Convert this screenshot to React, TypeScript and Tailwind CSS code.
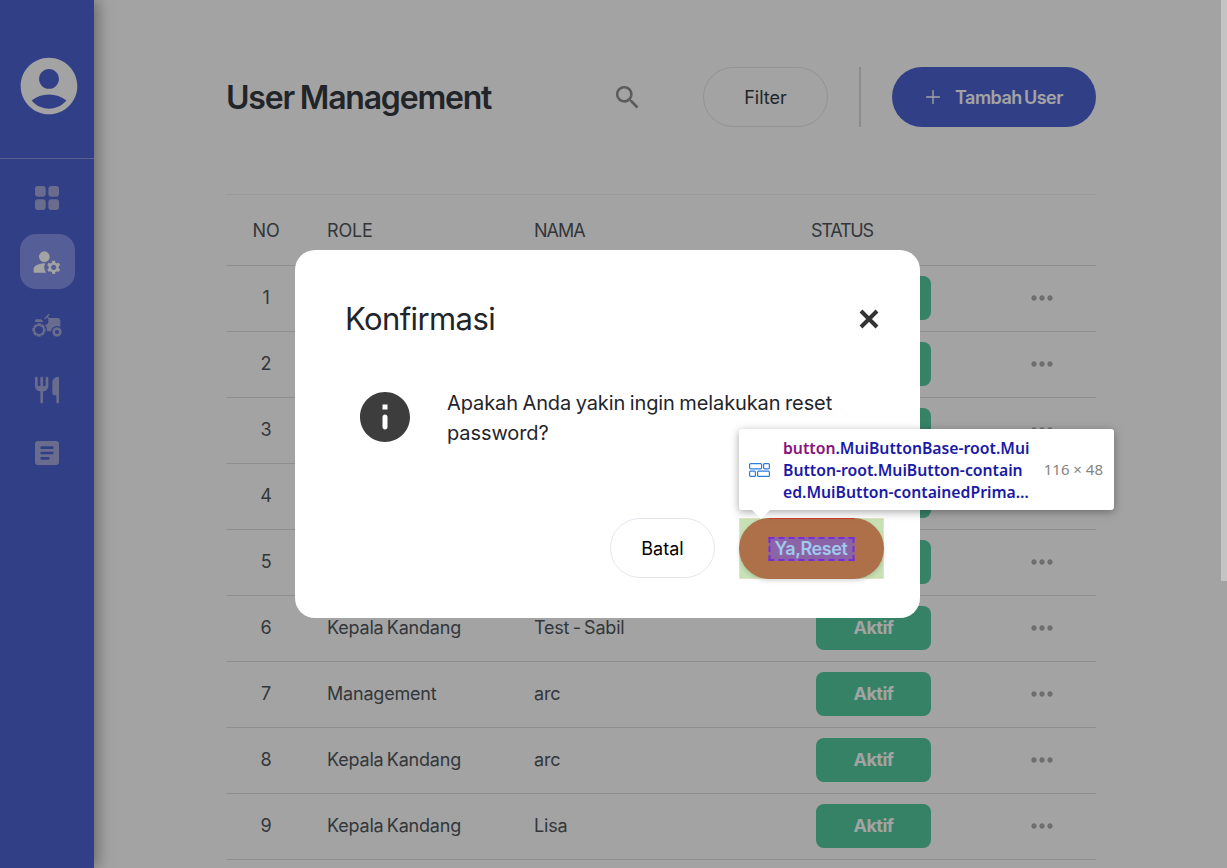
import { MdAgriculture, MdManageAccounts, MdMoreHoriz, MdSearch } from "react-icons/md";
import { Plus } from "lucide-react";

const rows = [
  { no: 1, role: "Management", name: "Admin" },
  { no: 2, role: "Kepala Kandang", name: "Budi" },
  { no: 3, role: "Kepala Kandang", name: "Sari" },
  { no: 4, role: "Management", name: "Andi" },
  { no: 5, role: "Kepala Kandang", name: "Rudi" },
  { no: 6, role: "Kepala Kandang", name: "Test - Sabil" },
  { no: 7, role: "Management", name: "arc" },
  { no: 8, role: "Kepala Kandang", name: "arc" },
  { no: 9, role: "Kepala Kandang", name: "Lisa" },
];

function AvatarIcon() {
  return (
    <svg viewBox="0 0 24 24" className="w-[68px] h-[68px] text-white" fill="currentColor">
      <path d="M12 2C6.48 2 2 6.48 2 12s4.48 10 10 10 10-4.48 10-10S17.52 2 12 2zm0 4c1.93 0 3.5 1.57 3.5 3.5S13.93 13 12 13s-3.5-1.57-3.5-3.5S10.07 6 12 6zm0 14c-2.03 0-4.43-.82-6.14-2.88C7.55 15.8 9.68 15 12 15s4.45.8 6.14 2.12C16.43 19.18 14.03 20 12 20z" />
    </svg>
  );
}

function GridIcon() {
  return (
    <svg viewBox="0 0 24 24" className="w-8 h-8" fill="currentColor">
      <path d="M5 11h4c1.1 0 2-.9 2-2V5c0-1.1-.9-2-2-2H5c-1.1 0-2 .9-2 2v4c0 1.1.9 2 2 2zm0 10h4c1.1 0 2-.9 2-2v-4c0-1.1-.9-2-2-2H5c-1.1 0-2 .9-2 2v4c0 1.1.9 2 2 2zm8-16v4c0 1.1.9 2 2 2h4c1.1 0 2-.9 2-2V5c0-1.1-.9-2-2-2h-4c-1.1 0-2 .9-2 2zm2 16h4c1.1 0 2-.9 2-2v-4c0-1.1-.9-2-2-2h-4c-1.1 0-2 .9-2 2v4c0 1.1.9 2 2 2z" />
    </svg>
  );
}

function RestaurantIcon() {
  return (
    <svg viewBox="0 0 24 24" className="w-8 h-8" fill="currentColor">
      <path d="M16 6v8c0 1.1.9 2 2 2h1v5c0 .55.45 1 1 1s1-.45 1-1V3.13c0-.65-.61-1.13-1.24-.98C17.6 2.68 16 4.51 16 6zM11 9H9V3c0-.55-.45-1-1-1S7 2.45 7 3v6H5V3c0-.55-.45-1-1-1S3 2.45 3 3v6c0 2.21 1.79 4 4 4v8c0 .55.45 1 1 1s1-.45 1-1v-8c2.21 0 4-1.79 4-4V3c0-.55-.45-1-1-1s-1 .45-1 1v6z" />
    </svg>
  );
}

function ArticleIcon() {
  return (
    <svg viewBox="0 0 24 24" className="w-8 h-8" fill="currentColor">
      <path d="M19 3H5c-1.1 0-2 .9-2 2v14c0 1.1.9 2 2 2h14c1.1 0 2-.9 2-2V5c0-1.1-.9-2-2-2zm-6 14H8c-.55 0-1-.45-1-1s.45-1 1-1h5c.55 0 1 .45 1 1s-.45 1-1 1zm3-4H8c-.55 0-1-.45-1-1s.45-1 1-1h8c.55 0 1 .45 1 1s-.45 1-1 1zm0-4H8c-.55 0-1-.45-1-1s.45-1 1-1h8c.55 0 1 .45 1 1s-.45 1-1 1z" />
    </svg>
  );
}

function InfoIcon() {
  return (
    <svg viewBox="0 0 24 24" className="w-[60px] h-[60px] text-[#3d3d3d]" fill="currentColor">
      <path d="M12 2C6.48 2 2 6.48 2 12s4.48 10 10 10 10-4.48 10-10S17.52 2 12 2zm0 15c-.55 0-1-.45-1-1v-4c0-.55.45-1 1-1s1 .45 1 1v4c0 .55-.45 1-1 1zm1-8h-2V7h2v2z" />
    </svg>
  );
}

function Sidebar() {
  return (
    <aside className="w-[94px] shrink-0 h-full bg-[#4e63d2] shadow-[4px_0_14px_rgba(0,0,0,0.35)] z-10">
      <div className="h-[159px] border-b border-[#8c97e0] flex items-start justify-center pt-[52px] pl-[3px]">
        <AvatarIcon />
      </div>
      <nav className="flex flex-col items-center gap-[9px] pt-[11px] text-[#a5a9dc]">
        <div className="w-[55px] h-[55px] flex items-center justify-center rounded-2xl">
          <GridIcon />
        </div>
        <div className="w-[55px] h-[55px] flex items-center justify-center rounded-2xl bg-[#8594ed] text-white">
          <MdManageAccounts size={32} />
        </div>
        <div className="w-[55px] h-[55px] flex items-center justify-center rounded-2xl">
          <MdAgriculture size={32} />
        </div>
        <div className="w-[55px] h-[55px] flex items-center justify-center rounded-2xl">
          <RestaurantIcon />
        </div>
        <div className="w-[55px] h-[55px] -mt-[1px] flex items-center justify-center rounded-2xl">
          <ArticleIcon />
        </div>
      </nav>
    </aside>
  );
}

function UserTable() {
  return (
    <div className="mt-[67px] border-t border-[#f0f0f0] text-[18px] text-[#50565d] tracking-[-0.2px] [word-spacing:-1.5px]">
      <div className="h-[71px] grid grid-cols-[101px_207px_282px_115px_1fr] items-center border-b border-[#dfdfdf]">
        <div className="w-[80px] text-center">NO</div>
        <div>ROLE</div>
        <div className="tracking-[-1px]">NAMA</div>
        <div className="-ml-[5px] tracking-[-1.2px]">STATUS</div>
        <div />
      </div>
      {rows.map((r) => (
        <div key={r.no} className="h-[66px] pb-[1px] grid grid-cols-[101px_207px_282px_115px_1fr] items-center border-b border-[#dfdfdf]">
          <div className="w-[80px] text-center pb-[2px]">{r.no}</div>
          <div className="pb-[2px]">{r.role}</div>
          <div className="pb-[2px]">{r.name}</div>
          <div className="h-[44px] pb-[2px] rounded-lg bg-[#53cba1] text-white font-bold tracking-[-0.5px] flex items-center justify-center">
            Aktif
          </div>
          <div className="pl-[95px] text-[#adadad]">
            <MdMoreHoriz size={32} />
          </div>
        </div>
      ))}
    </div>
  );
}

function Highlight() {
  return (
    <div className="relative w-[145px] h-[61px] bg-[#c7e0b5] border border-[#e5e3c0]">
      <div className="absolute -inset-[1px] rounded-full bg-[#ad7049] shadow-[0_2px_4px_rgba(0,0,0,0.15)] flex items-center justify-center">
        <div className="absolute top-0 left-[30px] right-[30px] h-[1px] bg-[#c8402a]" />
        <div className="w-[86px] h-[24px] bg-[#8b64a8] border-2 border-dashed border-[#7b2fd0] flex items-center justify-center text-[#a0c9ec] text-[18px] font-semibold tracking-[-0.4px] -translate-x-[0.5px]">
          Ya,Reset
        </div>
      </div>
    </div>
  );
}

function Inspector() {
  return (
    <div className="absolute z-40 left-[739px] top-[429px] w-[375px] h-[81px] bg-white rounded-[3px] shadow-[0_2px_8px_rgba(0,0,0,0.35)] flex items-center pl-[10px] pr-[11px] font-['Noto_Sans',sans-serif]">
      <svg viewBox="0 0 21 14" className="w-[21px] h-[14px] shrink-0" fill="none" stroke="#2a7de1" strokeWidth="1.2">
        <rect x="0.6" y="0.6" width="12" height="5.2" rx="1" />
        <rect x="14.6" y="0.6" width="5.8" height="5.2" rx="1" />
        <rect x="0.6" y="8.2" width="5.8" height="5.2" rx="1" />
        <rect x="8.6" y="8.2" width="11.8" height="5.2" rx="1" />
      </svg>
      <div className="ml-[13px] w-[250px] shrink-0 text-[15.75px] leading-[22px] font-semibold text-[#1a1aa6] whitespace-nowrap">
        <div>
          <span className="text-[#881280]">button</span>.MuiButtonBase-root.Mui
        </div>
        <div>Button-root.MuiButton-contain</div>
        <div>ed.MuiButton-containedPrima…</div>
      </div>
      <div className="ml-auto whitespace-nowrap text-[15px] text-[#858585]">116 × 48</div>
      <div className="absolute left-[13px] -bottom-[9px] w-0 h-0 border-l-[9px] border-r-[9px] border-t-[9px] border-l-transparent border-r-transparent border-t-white" />
    </div>
  );
}

function ConfirmDialog() {
  return (
    <div className="w-[625px] h-[368px] bg-white rounded-[20px] pl-[50px] pr-[36px] pt-[46px] flex flex-col text-[#1f252b]">
      <div className="h-[46px] flex items-center justify-between">
        <h2 className="text-[31px] tracking-[-0.6px] font-normal">Konfirmasi</h2>
        <svg viewBox="0 0 20 20" className="w-5 h-5 text-[#333] mr-[5px]" fill="none" stroke="currentColor" strokeWidth="4">
          <path d="M2 2 18 18M18 2 2 18" />
        </svg>
      </div>
      <div className="flex mt-[48px] pl-[10px] items-start">
        <div className="w-[60px] shrink-0 -mt-[3px]">
          <InfoIcon />
        </div>
        <p className="ml-[32px] w-[400px] text-[20px] leading-[30px] tracking-[-0.1px] [word-spacing:-1px] -mt-[2px]">
          Apakah Anda yakin ingin melakukan reset password?
        </p>
      </div>
      <div className="mt-auto mb-[39px] flex justify-end items-start gap-[24px]">
        <button className="w-[105px] h-[60px] rounded-full border border-[#e6e6f0] text-black text-[18px]">Batal</button>
        <Highlight />
      </div>
    </div>
  );
}

export default function App() {
  return (
    <div className="relative w-[1227px] h-[868px] overflow-hidden bg-white flex font-['Inter',sans-serif]">
      <Sidebar />
      <main className="flex-1 pl-[132px] pr-[131px] pt-[67px]">
        <header className="h-[60px] flex items-center text-[#343a40]">
          <h1 className="mt-[2px] text-[32px] font-semibold tracking-[-1.2px] [word-spacing:-1px]">User Management</h1>
          <MdSearch size={31} className="ml-auto text-[#8f8f8f]" />
          <button className="ml-[60px] w-[125px] h-[60px] rounded-full border border-[#e6e6e6] text-[18px]">Filter</button>
          <div className="mx-[31px] w-[2px] h-[60px] bg-[#dcdcdc]" />
          <button className="w-[204px] h-[60px] rounded-full bg-[#4e63d2] text-white text-[18px] font-semibold tracking-[-0.5px] [word-spacing:-2px] flex items-center pl-[30px] gap-[11px]">
            <Plus size={22} strokeWidth={1.5} />
            Tambah User
          </button>
        </header>
        <UserTable />
      </main>
      <div className="absolute inset-0 z-20 bg-black/36 flex items-center justify-center pr-[12px]">
        <ConfirmDialog />
      </div>
      <Inspector />
      <div className="absolute right-0 top-0 z-30 w-[6px] h-[581px] bg-[#c4c4c4]" />
    </div>
  );
}
